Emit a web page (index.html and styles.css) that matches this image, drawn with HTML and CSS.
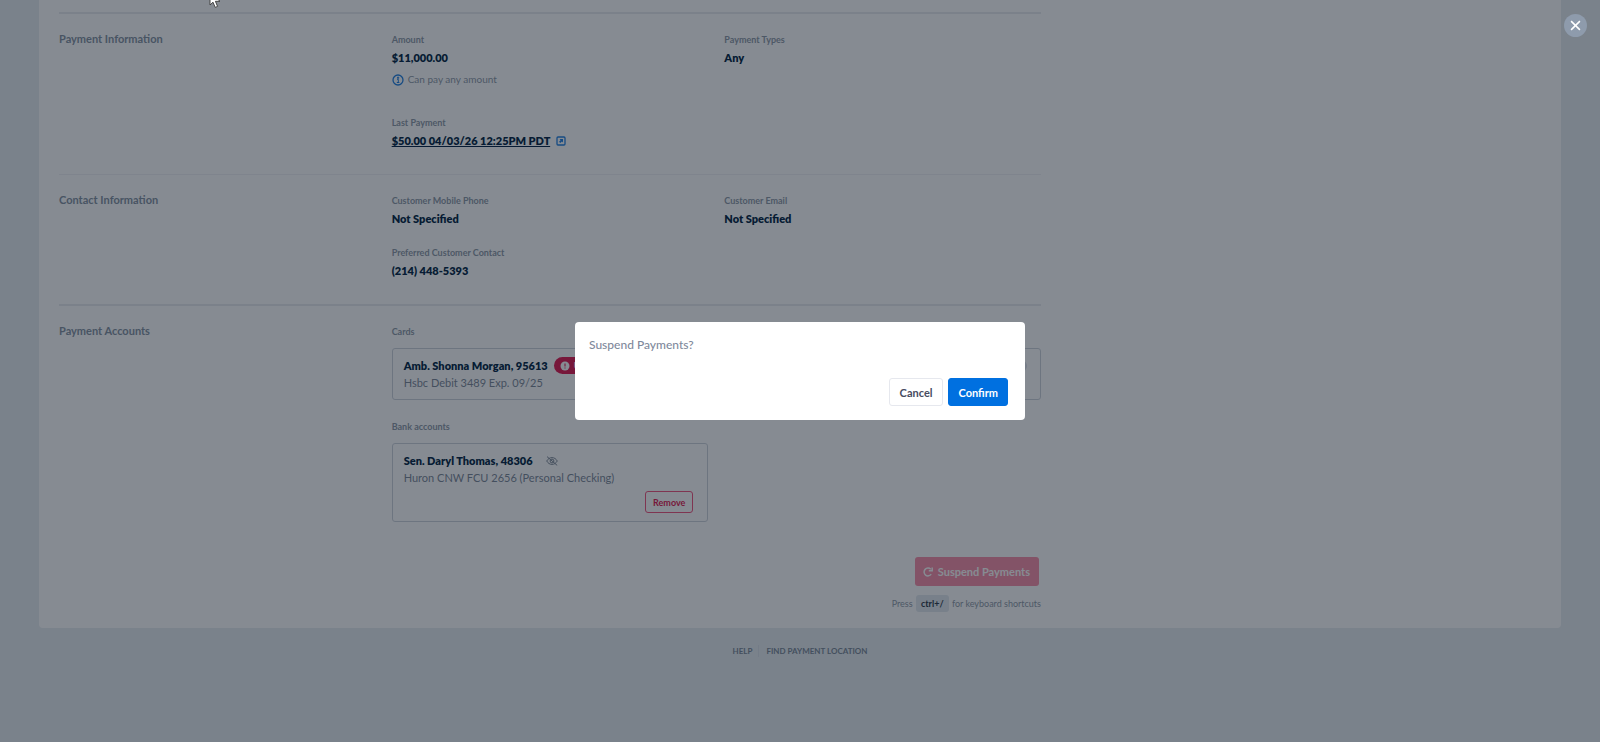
FILE: index.html
```html
<!DOCTYPE html>
<html lang="en">
<head>
    <meta charset="UTF-8">
    <meta name="viewport" content="width=device-width, initial-scale=1.0">
    <title>Account Details</title>
    <link rel="stylesheet" href="styles.css">
</head>
<body>

    <main class="panel">
        <div class="details">
            <section class="row row-strong payment">
                <h2>Payment Information</h2>
                <div class="fields">
                    <dl class="field">
                        <dt>Amount</dt>
                        <dd>$11,000.00</dd>
                        <dd class="hint">
                            <svg width="12" height="12" viewBox="0 0 12 12"><circle cx="6" cy="6" r="5" fill="none" stroke="#1f7fe0" stroke-width="1.3"/><path d="M5 5.3h1.3v3M4.8 8.5h2.6M5.5 3.2h1.2v1.1H5.5z" fill="none" stroke="#1f7fe0"/></svg>
                            Can pay any amount
                        </dd>
                    </dl>
                    <dl class="field">
                        <dt>Payment Types</dt>
                        <dd>Any</dd>
                    </dl>
                    <dl class="field">
                        <dt>Last Payment</dt>
                        <dd>
                            <a href="#">$50.00 04/03/26 12:25PM PDT</a>
                            <svg class="open-icon" width="10" height="10" viewBox="0 0 10 10"><rect x="1" y="1" width="8" height="8" rx="1" fill="none" stroke="#1f7fe0" stroke-width="1.3"/><path d="M3.6 3h3.4v3.4L5.9 5.6 4.3 7.1 3 5.8 4.6 4.2z" fill="#1f7fe0"/></svg>
                        </dd>
                    </dl>
                </div>
            </section>

            <section class="row contact">
                <h2>Contact Information</h2>
                <div class="fields">
                    <dl class="field">
                        <dt>Customer Mobile Phone</dt>
                        <dd>Not Specified</dd>
                    </dl>
                    <dl class="field">
                        <dt>Customer Email</dt>
                        <dd>Not Specified</dd>
                    </dl>
                    <dl class="field">
                        <dt>Preferred Customer Contact</dt>
                        <dd>(214) 448-5393</dd>
                    </dl>
                </div>
            </section>

            <section class="row row-strong accounts">
                <h2>Payment Accounts</h2>
                <div class="account-list">
                    <h3>Cards</h3>
                    <div class="account">
                        <div class="account-name">
                            <strong>Amb. Shonna Morgan, 95613</strong>
                            <span class="badge">
                                <svg width="10" height="10" viewBox="0 0 10 10"><circle cx="5" cy="5" r="4.5" fill="#fff"/><path d="M5 2.4v3M5 6.5v1.1" stroke="#e0174f" stroke-width="1.1"/></svg>
                                Unverified
                            </span>
                            <input class="switch" type="checkbox" aria-label="Card enabled">
                        </div>
                        <p>Hsbc Debit 3489 Exp. 09/25</p>
                    </div>
                    <h3>Bank accounts</h3>
                    <div class="account bank">
                        <div class="account-name">
                            <strong>Sen. Daryl Thomas, 48306</strong>
                            <svg class="eye-icon" width="12" height="10" viewBox="0 0 12 10" fill="none" stroke="#7f8a98"><path d="M.7 5C2 2.8 3.8 1.6 6 1.6S10 2.8 11.3 5C10 7.2 8.2 8.4 6 8.4S2 7.2.7 5z"/><circle cx="6" cy="5" r="1.9"/><path d="M1 .6l10.2 8.8"/></svg>
                        </div>
                        <p>Huron CNW FCU 2656 (Personal Checking)</p>
                        <button class="btn-remove" type="button">Remove</button>
                    </div>
                </div>
            </section>

            <div class="actions">
                <button class="btn-suspend" type="button">
                    <svg width="10" height="10" viewBox="0 0 10 10" fill="none" stroke="currentColor" stroke-width="1.5"><path d="M8.2 7.2A3.9 3.9 0 1 1 7.8 2.3"/><path d="M9.2.5v3.3H5.8"/></svg>
                    Suspend Payments
                </button>
                <p class="shortcut">Press <kbd>ctrl+/</kbd> for keyboard shortcuts</p>
            </div>
        </div>
    </main>

    <footer class="footer">
        <a href="#">Help</a>
        <a href="#">Find Payment Location</a>
    </footer>

    <div class="overlay">
        <div class="modal" role="dialog" aria-modal="true" aria-labelledby="modalTitle">
            <p id="modalTitle">Suspend Payments?</p>
            <div class="modal-buttons">
                <button class="btn-cancel" type="button">Cancel</button>
                <button class="btn-confirm" type="button">Confirm</button>
            </div>
        </div>
        <button class="close" type="button" aria-label="Close">
            <svg width="11" height="11" viewBox="0 0 10 10" stroke="#fff" stroke-width="1.4"><path d="M1 1l8 8M9 1L1 9"/></svg>
        </button>
    </div>

    <svg class="cursor" width="12" height="18" viewBox="0 0 12 18"><path d="M1 1v13l3-2.8 2.2 5.2 2.4-1L6.4 10.3H11z" fill="#fff" stroke="#444" stroke-width="1"/></svg>

</body>
</html>
```
FILE: styles.css
```css
* {
    box-sizing: border-box;
}

body {
    margin: 0;
    min-height: 100vh;
    background-color: #e7edf0;
    color: #001f42;
    font-family: Lato, "Liberation Sans", sans-serif;
    font-size: 11px;
    line-height: 17px;
}

h2, h3, p, dl, dd {
    margin: 0;
}

button {
    font-family: inherit;
    font-weight: bold;
    cursor: pointer;
}

svg {
    flex-shrink: 0;
}

.panel {
    margin: 0 39px;
    padding: 12px 20px 16px;
    background-color: #fff;
    border-radius: 0 0 4px 4px;
}

.details {
    max-width: 982px;
}

.row {
    display: grid;
    grid-template-columns: repeat(3, 1fr);
    column-gap: 16px;
    padding: 17px 0 25px;
    border-top: 1px solid #f0f1f4;
}

.row-strong {
    border-top: 2px solid #e8eaee;
}

.row h2 {
    color: #8391a1;
    font-size: 11px;
    line-height: 16px;
}

.fields,
.account-list {
    grid-column: span 2;
}

.fields {
    display: grid;
    grid-template-columns: 1fr 1fr;
    column-gap: 16px;
    row-gap: 17px;
    align-content: start;
}

.payment .fields {
    row-gap: 26px;
}

dt,
h3 {
    margin-bottom: 1px;
    color: #8d98a6;
    font-size: 9px;
    font-weight: bold;
    line-height: 17px;
}

.field dd {
    font-weight: 800;
}

.field a {
    color: inherit;
}

.open-icon {
    margin-left: 3px;
    vertical-align: -1px;
}

.field .hint {
    display: flex;
    align-items: center;
    gap: 4px;
    margin-top: 5px;
    color: #8d98a6;
    font-size: 10px;
    font-weight: normal;
}

.account {
    margin: 8px 0 18px;
    padding: 8px 11px;
    border: 1px solid #cdd3db;
    border-radius: 3px;
    color: #7b8797;
}

.account-name {
    display: flex;
    align-items: center;
}

.account strong {
    color: #001f42;
    font-weight: 800;
}

.bank {
    display: flex;
    flex-direction: column;
    width: calc(50% - 8px);
    margin-bottom: 0;
}

.badge {
    display: flex;
    align-items: center;
    gap: 4px;
    margin-left: 6px;
    padding: 0 6px;
    border-radius: 9px;
    background-color: #e0174f;
    color: #fff;
    font-size: 9px;
    font-weight: bold;
}

.switch {
    appearance: none;
    width: 24px;
    height: 12px;
    margin: 0 2px 0 auto;
    border-radius: 6px;
    background-color: #dce1e8;
}

.eye-icon {
    margin-left: 13px;
}

.btn-remove {
    align-self: flex-end;
    height: 22px;
    margin: 5px 3px 0 0;
    padding: 0 7px;
    border: 1px solid #f0527d;
    border-radius: 3px;
    background-color: #fff;
    color: #e0174f;
    font-size: 9px;
}

.actions {
    display: flex;
    flex-direction: column;
    align-items: flex-end;
    gap: 9px;
    margin-top: 10px;
}

.btn-suspend {
    display: flex;
    align-items: center;
    gap: 5px;
    height: 29px;
    margin-right: 2px;
    padding: 0 9px 0 8px;
    border: 0;
    border-radius: 3px;
    background-color: #f88fa8;
    color: #fff;
    font-size: 11px;
}

.shortcut {
    color: #8d98a6;
    font-size: 9px;
}

kbd {
    display: inline-block;
    margin: 0 1px;
    padding: 0 5px;
    border-radius: 3px;
    background-color: #e2e9ee;
    color: #2c3848;
    font-family: inherit;
    font-weight: bold;
}

.footer {
    display: flex;
    justify-content: center;
    padding-top: 17px;
    font-size: 8px;
    font-weight: bold;
    line-height: 12px;
    text-transform: uppercase;
}

.footer a {
    color: #7a8797;
    text-decoration: none;
}

.footer a + a {
    margin-left: 6px;
    padding-left: 7px;
    border-left: 1px solid #dbe0e8;
}

.overlay {
    position: fixed;
    inset: 0;
    display: flex;
    align-items: center;
    justify-content: center;
    background-color: rgba(13, 23, 38, 0.5);
}

.modal {
    width: 450px;
    padding: 14px 17px 14px 14px;
    border-radius: 4px;
    background-color: #fff;
    color: #7f8a9c;
    font-size: 12px;
    font-weight: 500;
}

.modal-buttons {
    display: flex;
    justify-content: flex-end;
    gap: 5px;
    margin-top: 25px;
}

.modal-buttons button {
    height: 28px;
    padding: 0 10px;
    border: 1px solid #e6e8ee;
    border-radius: 3px;
    background-color: #fff;
    color: #474c61;
    font-size: 11px;
}

.modal-buttons .btn-confirm {
    padding: 0 9px;
    border-color: #0070e0;
    background-color: #0070e0;
    color: #fff;
}

.close {
    position: absolute;
    top: 14px;
    right: 13px;
    display: grid;
    place-items: center;
    width: 23px;
    height: 23px;
    padding: 0;
    border: 0;
    border-radius: 50%;
    background-color: #8e9bac;
}

.cursor {
    position: absolute;
    top: -9px;
    left: 209px;
}
```
